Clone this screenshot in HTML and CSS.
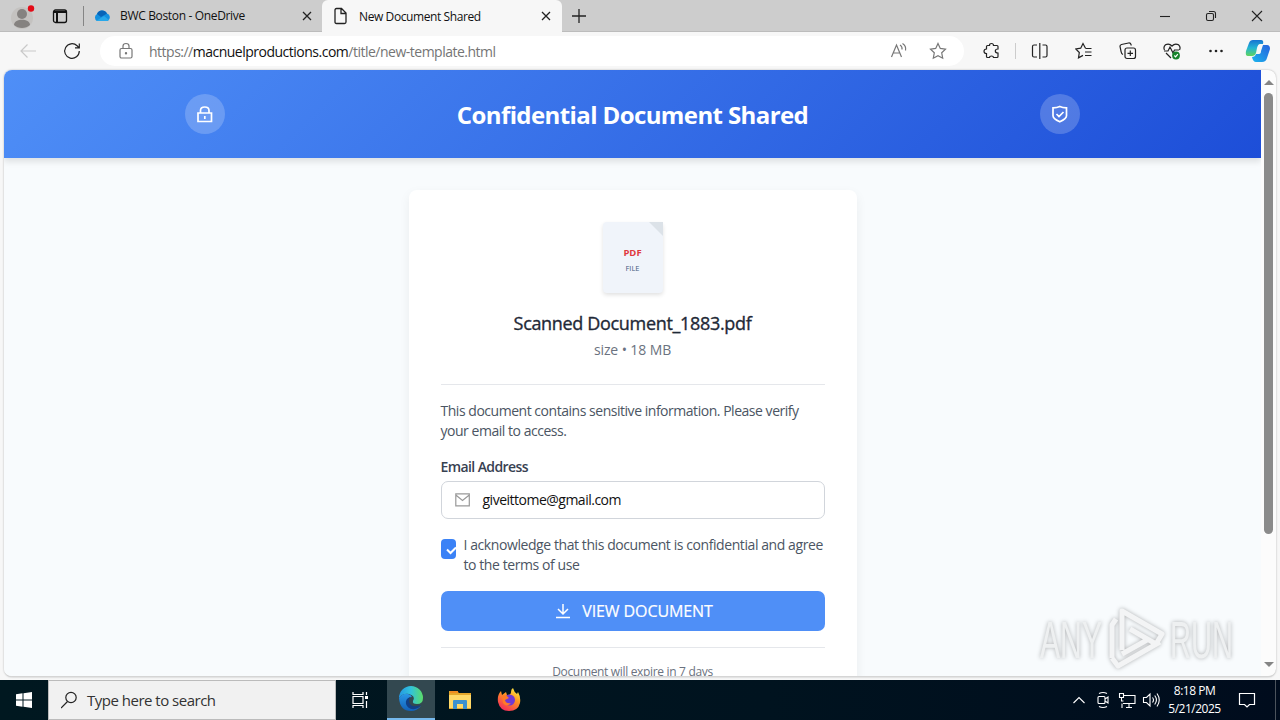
FILE: index.html
```html
<!DOCTYPE html>
<html lang="en">
<head>
    <meta charset="UTF-8">
    <meta name="viewport" content="width=device-width, initial-scale=1.0">
    <title>New Document Shared</title>
    <link rel="stylesheet" href="styles.css">
</head>
<body>
    <div class="desktop">
        <!-- Tabs -->
        <div class="tabbar">
            <svg class="profile" width="26" height="28" viewBox="0 0 26 28">
                <circle cx="13" cy="16" r="11" fill="#c4c2c0"/>
                <circle cx="13" cy="12" r="5" fill="#858280"/>
                <path d="M5 23c0-7 16-7 16 0-4 4-12 4-16 0z" fill="#858280"/>
                <circle cx="22" cy="6.500" r="3.200" fill="#e30b17"/>
            </svg>
            <svg class="workspaces" width="16" height="16" viewBox="0 0 16 16" fill="none" stroke="#111" stroke-width="1.300">
                <rect x="1.500" y="2" width="13" height="12.500" rx="2"/>
                <path d="M2 4h12M5 5v9" stroke-width="2"/>
            </svg>
            <span class="tab-divider"></span>
            <div class="tab">
                <svg width="18" height="18" viewBox="0 0 18 18">
                    <path d="M4 14a4 4 0 0 1 0-7 5.500 5.500 0 0 1 10-.5 4 4 0 0 1 .5 7.500z" fill="#1490df"/>
                    <path d="M4 7a5.500 5.500 0 0 1 10-.5L8 10z" fill="#0864b8"/>
                    <path d="M3 14l8-5 5 4q-1 1-2 1z" fill="#28a8ea"/>
                </svg>
                <span class="tab-title tab-title-first">BWC Boston - OneDrive</span>
                <svg class="close" width="10" height="10" viewBox="0 0 10 10"><path d="M1 1l8 8M9 1L1 9"/></svg>
            </div>
            <div class="tab active">
                <svg width="16" height="18" viewBox="0 0 16 18" fill="none" stroke="#222" stroke-width="1.300">
                    <path d="M3.500 1.500h5l4.500 4.500v9q0 1.500-1.500 1.500H3.500q-1.500 0-1.500-1.500V3q0-1.500 1.500-1.500zM8 2v4.500h5"/>
                </svg>
                <span class="tab-title">New Document Shared</span>
                <svg class="close" width="10" height="10" viewBox="0 0 10 10"><path d="M1 1l8 8M9 1L1 9"/></svg>
            </div>
            <svg class="new-tab" width="16" height="16" viewBox="0 0 16 16" stroke="#222" stroke-width="1.300"><path d="M8 1v14M1 8h14"/></svg>
            <div class="window-buttons">
                <svg width="12" height="12" viewBox="0 0 12 12"><path d="M1 6.500h10"/></svg>
                <svg width="12" height="12" viewBox="0 0 12 12"><rect x="1.500" y="3.500" width="7" height="7" rx="1.500"/><path d="M4 1.500h4.500q2 0 2 2V8"/></svg>
                <svg width="12" height="12" viewBox="0 0 12 12"><path d="M1 1l10 10M11 1L1 11"/></svg>
            </div>
        </div>

        <!-- Address bar -->
        <div class="toolbar">
            <svg class="back" width="18" height="16" viewBox="0 0 18 16"><path d="M17 8H2M8.500 1.500L2 8l6.500 6.500"/></svg>
            <svg class="reload" width="18" height="18" viewBox="0 0 18 18"><path d="M16.300 9a7.300 7.300 0 1 1-2.200-5.200l1.900 1.900M16.300 1.500v4.300H12"/></svg>
            <div class="address">
                <svg class="lock" width="16" height="18" viewBox="0 0 16 18"><rect x="2" y="6.500" width="12" height="9.500" rx="1.500"/><path d="M5 6.500V4q0-2.500 3-2.500T11 4v2.500"/><circle cx="8" cy="11.200" r=".6"/></svg>
                <span class="url">https://<b>macnuelproductions.com</b>/title/new-template.html</span>
                <svg class="read-aloud" width="18" height="18" viewBox="0 0 18 18"><path d="M1.500 15L6.500 3l5 12M3.300 11h6.400M10 3q2.500 1.500 2 4.500M12.500 1.500q4 2.500 3 7"/></svg>
                <svg class="favorite" width="18" height="18" viewBox="0 0 18 18"><path d="M9 1.500l2.300 4.900 5.200.7-3.800 3.700 1 5.400L9 13.600l-4.700 2.600 1-5.400-3.800-3.700 5.200-.7z"/></svg>
            </div>
            <div class="tools">
                <svg width="18" height="18" viewBox="0 0 18 18"><path d="M5.500 3.500H7.500q0-2 2-2t2 2H15q1 0 1 1V7q-2.700 0-2.700 2t2.700 2v3.500q0 1-1 1h-3.500q0-1.500-2-1.500t-2 1.500h-2q-1 0-1-1V11.500Q2 11.500 2 9.300t2.500-2.300V4.500q0-1 1-1z"/></svg>
                <span class="tool-divider"></span>
                <svg width="18" height="18" viewBox="0 0 18 18"><path d="M6 3H3Q1.500 3 1.500 4.500v9Q1.500 15 3 15h3M11.500 3H14.500q1.500 0 1.500 1.500v9q0 1.500-1.500 1.500h-3M8.800 1v16"/></svg>
                <svg width="18" height="18" viewBox="0 0 18 18"><path d="M10.500 6.200L8 1.500 5.700 6.200.8 6.900l3.500 3.600-.8 5.300 4.500-2.400M10.500 6.500h6M10 10h6.500M10 13.500h6.500"/></svg>
                <svg width="18" height="18" viewBox="0 0 18 18"><rect x="6" y="6" width="10.500" height="10.500" rx="2"/><path d="M11.300 8.500v5.500M8.500 11.300H14M4 12.500Q2.500 12 2.200 10L1 4.500Q.8 3 2.500 2.500L9.500 1q2-.3 2.500 1.500l.2 1"/></svg>
                <svg width="18" height="18" viewBox="0 0 18 18"><path d="M1.500 8q-1.500-3 1-5.200Q6 .8 9 4q3-3.200 6.500-1.200 2.500 2.200 1 5.200M3 11l5 5M1 9h4l2-4 3 6 1.500-3H16"/><circle cx="13" cy="13.500" r="3.900" fill="#17832b" stroke="none"/><path d="M11.300 13.500l1.300 1.300 2.200-2.600" stroke="#fff"/></svg>
                <svg width="18" height="18" viewBox="0 0 18 18"><g fill="#222" stroke="none"><circle cx="3.500" cy="9" r="1.300"/><circle cx="9" cy="9" r="1.300"/><circle cx="14.500" cy="9" r="1.300"/></g></svg>
            </div>
            <svg class="copilot" width="26" height="24" viewBox="0 0 26 24">
                <defs>
                    <linearGradient id="cp1" x1="0" y1="0" x2="0" y2="1"><stop offset="0" stop-color="#1773d2"/><stop offset=".5" stop-color="#24b5d4"/><stop offset="1" stop-color="#60d45d"/></linearGradient>
                    <linearGradient id="cp2" x1="0" y1="1" x2="1" y2="0"><stop offset="0" stop-color="#1bb5ed"/><stop offset="1" stop-color="#2761dd"/></linearGradient>
                </defs>
                <path d="M8 1h8q3 0 2 4h-3q-2 0-3 4l-1 5q-1 3-4 3H3q-3 0-2-5L4 4q1-3 4-3z" fill="url(#cp1)"/>
                <path d="M18 6h4q3 0 3 4l-3 9q-1 4-5 4h-6q-3 0-4-5 3 0 4-3h3q2 0 2-3z" fill="url(#cp2)"/>
            </svg>
        </div>

        <!-- Web page -->
        <div class="frame">
            <div class="viewport">
                <header class="header">
                    <div class="header-inner">
                        <span class="badge">
                            <svg width="20" height="20" viewBox="0 0 20 20"><path d="M3 9h13.500v8.500H3zM5.500 9V6.500q0-3.500 4.250-3.500T14 6.500V9M9.800 12v3"/></svg>
                        </span>
                        <h1>Confidential Document Shared</h1>
                        <span class="badge">
                            <svg width="20" height="20" viewBox="0 0 20 20"><path d="M3 3.800q4 0 6.800-1.300 2.700 1.300 6.700 1.300v8q0 3-6.700 6-6.800-3-6.800-6zM6.500 10l2.500 2.500 4.500-4.500"/></svg>
                        </span>
                    </div>
                </header>
                <main class="card">
                    <div class="file-icon">
                        <span class="file-type">PDF</span>
                        <span class="file-label">FILE</span>
                    </div>
                    <h2>Scanned Document_1883.pdf</h2>
                    <p class="meta">size • 18 MB</p>
                    <hr>
                    <p class="message">This document contains sensitive information. Please verify your email to access.</p>
                    <div class="label">Email Address</div>
                    <div class="field">
                        <svg width="16" height="14" viewBox="0 0 16 14"><path d="M.8 .8h13.500v12H.8zM.8 2l6.700 5.500L14.300 2"/></svg>
                        <span>giveittome@gmail.com</span>
                    </div>
                    <div class="agree">
                        <span class="checkbox"><svg width="15" height="20" viewBox="0 0 15 20"><path d="M6 10.500l3.500 3.500L15 8.500"/></svg></span>
                        <p>I acknowledge that this document is confidential and agree to the terms of use</p>
                    </div>
                    <div class="button">
                        <svg width="16" height="16" viewBox="0 0 16 16"><path d="M8 1v10M3 6l5 5 5-5M1 14.500h14"/></svg>
                        <span>VIEW DOCUMENT</span>
                    </div>
                    <hr class="bottom-rule">
                    <p class="expire">Document will expire in 7 days</p>
                </main>
            </div>
            <div class="scrollbar">
                <span class="arrow-up"></span>
                <span class="thumb"></span>
                <span class="arrow-down"></span>
            </div>
        </div>

        <!-- Taskbar -->
        <div class="taskbar">
            <div class="start">
                <svg width="16" height="16" viewBox="0 0 16 16" fill="#fff"><path d="M0 2.200l6.500-.9v6.200H0zM7.500 1.200L16 0v7.500H7.500zM0 8.500h6.500v6.200L0 13.800zM7.500 8.500H16V16l-8.500-1.200z"/></svg>
            </div>
            <div class="search">
                <svg width="18" height="18" viewBox="0 0 18 18"><circle cx="10" cy="6.500" r="5.200"/><path d="M6.500 10.500L0 17"/></svg>
                <span>Type here to search</span>
            </div>
            <div class="task task-view">
                <svg width="18" height="18" viewBox="0 0 18 18" fill="none" stroke="#fff" stroke-width="1.200"><path d="M2 1v2.500h10V1M2 17v-2.500h10V17M2 5.500h10v7H2zM15.500 1v3M15.500 10v7"/><path d="M14 5h3v3h-3z" fill="#fff" stroke="none"/></svg>
            </div>
            <div class="task running">
                <svg width="26" height="26" viewBox="0 0 26 26">
                    <defs>
                        <linearGradient id="ed1" x1="0" y1="0" x2="1" y2="0"><stop offset="0" stop-color="#2498e3"/><stop offset=".5" stop-color="#32c3da"/><stop offset="1" stop-color="#5bdc68"/></linearGradient>
                        <linearGradient id="ed2" x1="0" y1="0" x2="0" y2="1"><stop offset="0" stop-color="#2997e6"/><stop offset="1" stop-color="#1260b8"/></linearGradient>
                    </defs>
                    <path d="M1 12A12 12 0 0 1 25 12q0 6-6 6-5 0-4-3 3-5-4-7-6-1-10 4z" fill="url(#ed1)"/>
                    <path d="M1 12q4-5 9-4 3 .5 4 3-5 0-5 5 1 5 8 6 4 0 6-2-4 5-10 5Q2 25 1 12z" fill="url(#ed2)"/>
                    <path d="M12 11q-5 2-4 7 2 6 9 5 4-1 6-4-11 4-12-4 0-2 1-4z" fill="#123f86"/>
                </svg>
            </div>
            <div class="task">
                <svg width="22" height="20" viewBox="0 0 22 20"><path d="M0 1h8l2 2h12v16H0z" fill="#e5a72b"/><path d="M0 5h22v13H0z" fill="#ffd968"/><path d="M1 1h8v2H1z" fill="#f08d20"/><path d="M4 11q0-1 1-1h12q1 0 1 1v8h-4v-5H8v5H4z" fill="#3c91cf"/></svg>
            </div>
            <div class="task">
                <svg width="24" height="24" viewBox="0 0 24 24">
                    <defs><linearGradient id="ff" x1=".8" y1="0" x2=".2" y2="1"><stop offset="0" stop-color="#fff044"/><stop offset=".4" stop-color="#ff9422"/><stop offset="1" stop-color="#f4235f"/></linearGradient></defs>
                    <path d="M1 14Q0 7 4 3l1 4 4-3 1 3q4 0 4-3 0-3 2-4 1 4 4 6l1-2q3 5 2 11-2 8-11 8T1 14z" fill="url(#ff)"/>
                    <circle cx="12.500" cy="12" r="5.500" fill="#7139d4"/>
                    <path d="M5 8q4-2 7 2l-4 2q1 4 6 3-4 5-8 0z" fill="#ff7a27"/>
                </svg>
            </div>
            <div class="tray">
                <svg class="chevron" width="14" height="18" viewBox="0 0 14 18"><path d="M1.500 12L7 6.500l5.500 5.500"/></svg>
                <svg width="14" height="18" viewBox="0 0 14 18"><rect x="2" y="5.500" width="7" height="7" rx="1"/><path d="M9 8l3-2v6L9 10M3 2.500q4-2 8 0M3 15.500q4 2 8 0"/></svg>
                <svg class="network" width="18" height="18" viewBox="0 0 18 18"><path d="M6 4.500h11v8H5M4 12.500V17M8 16.500h6M11 13v3M1.500 2.500h4v4h-4zM3.500 6.500V10h2"/></svg>
                <svg width="18" height="18" viewBox="0 0 18 18"><path d="M1.500 6.500h3L8 3v12l-3.500-3.500h-3zM10.500 6.500q2 2.500 0 5M12.700 4.500q3.500 4.500 0 9M15 2.500q4.500 6.500 0 13"/></svg>
            </div>
            <div class="clock"><span>8:18 PM</span><span>5/21/2025</span></div>
            <svg class="notifications" width="18" height="18" viewBox="0 0 18 18"><path d="M1.500 2.500h15v11h-5L9 16l-2.500-2.500h-5z"/></svg>
            <span class="show-desktop"></span>
        </div>

        <svg class="watermark" width="220" height="72" viewBox="0 0 220 72">
            <g class="mark-text">
                <text x="4" y="52" textLength="62" lengthAdjust="spacingAndGlyphs">ANY</text>
                <text x="134" y="52" textLength="63" lengthAdjust="spacingAndGlyphs">RUN</text>
            </g>
            <g class="mark-logo">
                <path d="M76 52V19l4-6M86 44V5l40 23-6 10-26-15M76 52l6 8 42-24M86 48l25-14"/>
            </g>
        </svg>
    </div>
</body>
</html>
```

FILE: styles.css
```css
* {
    box-sizing: border-box;
}

body {
    margin: 0;
    font-family: "Open Sans", "Noto Sans", sans-serif;
    color: #111;
}

h1, h2, p {
    margin: 0;
}

svg {
    display: block;
    flex: none;
}

.desktop {
    position: relative;
    display: flex;
    flex-direction: column;
    width: 1280px;
    height: 720px;
    overflow: hidden;
    background: #f7f7f7;
    white-space: nowrap;
}

/* Tabs */
.tabbar {
    display: flex;
    align-items: center;
    height: 32px;
    background: #cdcdcd;
    border-bottom: 1px solid #bcbcbc;
}

.profile {
    margin-left: 9px;
}

.workspaces {
    margin-left: 17px;
}

.tab-divider {
    width: 1px;
    height: 20px;
    margin-left: 15px;
    background: #858585;
}

.tab {
    display: flex;
    align-items: center;
    width: 238px;
    height: 32px;
    padding: 0 10px 0 9px;
    font-size: 12px;
}

.tab.active {
    width: 240px;
    padding: 0 11px;
    background: #f7f7f7;
    border-radius: 6px 6px 0 0;
    align-self: flex-start;
}

.tab-title {
    margin-left: 10px;
    letter-spacing: -0.4px;
}

.tab-title-first {
    margin-left: 9px;
    letter-spacing: -0.34px;
}

.close {
    margin-left: auto;
    stroke: #222;
    stroke-width: 1.3;
}

.new-tab {
    margin-left: 9px;
}

.window-buttons {
    display: flex;
    gap: 34px;
    margin: 0 17px 0 auto;
    fill: none;
    stroke: #222;
    stroke-width: 1.1;
}

/* Address bar */
.toolbar {
    display: flex;
    align-items: center;
    height: 38px;
    padding: 0 9px 0 19px;
    fill: none;
    stroke: #222;
    stroke-width: 1.2;
}

.back {
    stroke: #c9c9c9;
}

.reload {
    margin-left: 26px;
}

.address {
    display: flex;
    align-items: center;
    width: 864px;
    height: 30px;
    margin-left: 19px;
    padding: 0 17px 0 18px;
    background: #fff;
    border-radius: 15px;
    stroke: #777;
}

.url {
    margin-left: 15px;
    color: #757575;
    font-size: 14px;
    letter-spacing: -0.5px;
}

.url b {
    color: #111;
    font-weight: 400;
}

.read-aloud {
    margin-left: auto;
}

.favorite {
    margin-left: 21px;
}

.tools {
    display: flex;
    align-items: center;
    gap: 26px;
    margin-left: 18px;
}

.tool-divider {
    width: 1px;
    height: 16px;
    margin: 0 -11px 0 -11px;
    background: #ccc;
}

.copilot {
    margin-left: auto;
    stroke: none;
}

/* Page frame */
.frame {
    display: flex;
    width: 1272px;
    height: 607px;
    margin: 0 4px 3px;
    overflow: hidden;
    background: #fcfcfc;
    border-bottom: 1px solid #d5d5d5;
    border-radius: 8px;
    box-shadow: 0 0 2px rgba(0, 0, 0, 0.3);
    flex: none;
}

.viewport {
    width: 1257px;
    overflow: hidden;
    background: #f8fbfd;
}

.header {
    position: relative;
    height: 88px;
    padding-top: 24px;
    background: linear-gradient(135deg, #4f8ff7, #1d4ed8);
    box-shadow: 0 4px 6px rgba(0, 0, 0, 0.1);
}

.header-inner {
    display: flex;
    justify-content: space-between;
    align-items: center;
    width: 896px;
    margin: 0 auto;
}

.badge {
    display: flex;
    align-items: center;
    justify-content: center;
    width: 40px;
    height: 40px;
    border-radius: 50%;
    background: rgba(255, 255, 255, 0.2);
    fill: none;
    stroke: #fff;
    stroke-width: 1.7;
}

h1 {
    padding-top: 2px;
    color: #fff;
    font-size: 24px;
    line-height: 32px;
    letter-spacing: -0.6px;
}

.card {
    width: 448px;
    height: 520px;
    margin: 32px auto 0;
    padding: 32px;
    background: #fff;
    border-radius: 8px;
    box-shadow: 0 4px 12px rgba(0, 0, 0, 0.06);
    font-size: 14px;
    line-height: 20px;
    color: #4b5563;
    white-space: normal;
}

.file-icon {
    position: relative;
    display: flex;
    flex-direction: column;
    align-items: center;
    width: 60px;
    height: 71px;
    margin: 0 auto 16px;
    padding-top: 24px;
    background: #f0f4fa;
    border-radius: 4px;
    box-shadow: 0 2px 4px rgba(0, 0, 0, 0.12);
}

.file-icon::after {
    content: "";
    position: absolute;
    top: 0;
    right: 0;
    border-style: solid;
    border-width: 0 14px 14px 0;
    border-color: transparent #dce2e8 transparent transparent;
}

.file-type {
    color: #e0393e;
    font-size: 9.5px;
    font-weight: 700;
    line-height: 13px;
}

.file-label {
    margin-top: 3px;
    color: #475b7e;
    font-size: 7.5px;
    line-height: 12px;
}

h2 {
    color: #1f2937;
    font-size: 18px;
    font-weight: 400;
    line-height: 28px;
    text-align: center;
    letter-spacing: -0.33px;
    -webkit-text-stroke: 0.35px #1f2937;
}

.meta {
    margin-top: 3px;
    text-align: center;
    color: #6b7280;
    letter-spacing: -0.1px;
}

hr {
    height: 1px;
    margin: 24px 0 16px;
    border: 0;
    background: #e5e7eb;
}

.message {
    letter-spacing: -0.47px;
}

.label {
    margin-top: 16px;
    color: #374151;
    font-weight: 600;
    letter-spacing: -0.6px;
}

.field {
    display: flex;
    align-items: center;
    gap: 12px;
    height: 38px;
    margin-top: 4px;
    padding: 0 13px;
    border: 1px solid #d1d5db;
    border-radius: 7px;
    color: #111;
    letter-spacing: -0.5px;
    fill: none;
    stroke: #999;
    stroke-width: 1.2;
}

.agree {
    display: flex;
    gap: 8px;
    margin-top: 16px;
    letter-spacing: -0.42px;
}

.checkbox {
    flex: none;
    width: 15px;
    height: 20px;
    margin-top: 4px;
    border-radius: 4px;
    overflow: hidden;
    background: #3b82f6;
    fill: none;
    stroke: #fff;
    stroke-width: 2;
}

.button {
    display: flex;
    align-items: center;
    justify-content: center;
    gap: 11px;
    height: 40px;
    margin-top: 16px;
    padding-left: 3px;
    border-radius: 7px;
    background: #4f8ff7;
    color: #fff;
    font-size: 16px;
    letter-spacing: -0.1px;
    fill: none;
    stroke: #fff;
    stroke-width: 1.5;
}

.button span {
    -webkit-text-stroke: 0.2px #fff;
}

.bottom-rule {
    margin: 16px 0;
}

.expire {
    color: #6b7280;
    font-size: 12px;
    line-height: 16px;
    text-align: center;
    letter-spacing: -0.33px;
}

.scrollbar {
    display: flex;
    flex-direction: column;
    align-items: center;
    width: 15px;
    padding: 10px 0 9px;
}

.arrow-up,
.arrow-down {
    border: 5px solid transparent;
    border-top-width: 0;
    border-bottom: 5px solid #858585;
}

.arrow-down {
    margin-top: auto;
    border-bottom-width: 0;
    border-top: 5px solid #858585;
}

.thumb {
    width: 9px;
    height: 441px;
    margin-top: 8px;
    border-radius: 5px;
    background: #8b8b8b;
}

/* Taskbar */
.taskbar {
    display: flex;
    align-items: center;
    height: 40px;
    background: linear-gradient(90deg, #001820, #00131f 60%, #000c1d);
    color: #fff;
    flex: none;
}

.start {
    width: 48px;
    padding-left: 16px;
}

.search {
    display: flex;
    align-items: center;
    width: 288px;
    height: 40px;
    padding-left: 12px;
    border: 1px solid #bbb;
    background: #f1f1f1;
    color: #333;
    font-size: 15px;
    fill: none;
    stroke: #222;
    stroke-width: 1.2;
}

.search span {
    margin-left: 8px;
    letter-spacing: -0.5px;
}

.task {
    display: flex;
    align-items: center;
    justify-content: center;
    width: 48px;
    height: 40px;
    margin-right: 1px;
}

.task-view {
    width: 50px;
    padding-right: 2px;
}

.running {
    background: #334850;
    border-bottom: 2px solid #76b9ed;
}

.tray {
    display: flex;
    align-items: center;
    gap: 8px;
    margin-left: auto;
    fill: none;
    stroke: #fff;
    stroke-width: 1.1;
}

.chevron {
    margin-right: 2px;
}

.network {
    margin-right: -2px;
}

.clock {
    display: flex;
    flex-direction: column;
    align-items: center;
    width: 55px;
    margin-left: 7px;
    font-size: 12px;
    line-height: 18px;
    letter-spacing: -0.5px;
}

.notifications {
    margin-left: 16px;
    fill: none;
    stroke: #fff;
    stroke-width: 1.2;
}

.show-desktop {
    width: 1px;
    height: 40px;
    margin: 0 4px 0 19px;
    background: #4b535c;
}

/* Watermark lies over the page */
.watermark {
    position: absolute;
    left: 1036px;
    top: 606px;
    overflow: visible;
    filter: drop-shadow(0 0 2px rgba(0, 0, 0, 0.3));
}

.mark-text {
    fill: #eef0f1;
    font-family: "Liberation Sans", Arial, sans-serif;
    font-size: 52px;
}

.mark-logo {
    fill: none;
    stroke: #f3f4f5;
    stroke-width: 5;
    stroke-linejoin: round;
}
```
